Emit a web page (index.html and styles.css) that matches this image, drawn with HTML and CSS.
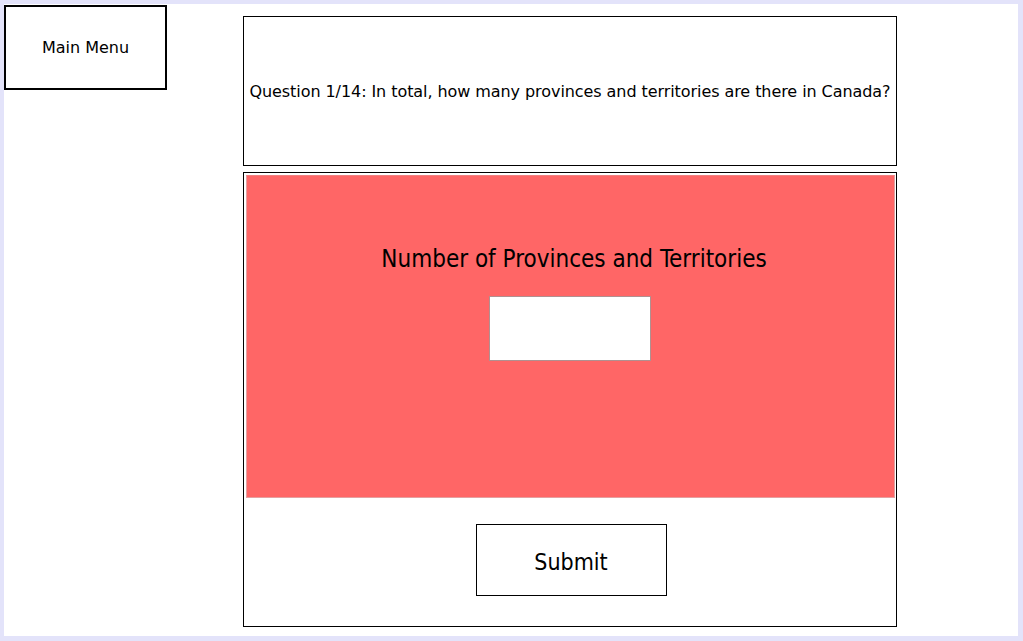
FILE: index.html
```html
<!DOCTYPE html>
<html>
<head>
<meta charset="utf-8">
<link rel="stylesheet" href="styles.css">
</head>
<body>
<div class="frame">
  <div class="sidebar">
    <div class="menu-btn">Main Menu</div>
  </div>
  <div class="main">
    <div class="question">Question 1/14: In total, how many provinces and territories are there in Canada?</div>
    <div class="answer">
      <div class="panel">
        <div class="panel-title">Number of Provinces and Territories</div>
        <input class="num-input" type="text">
      </div>
      <div class="submit-row">
        <div class="submit-btn">Submit</div>
      </div>
    </div>
  </div>
</div>
</body>
</html>
```
FILE: styles.css
```css
html, body {
  margin: 0;
  padding: 0;
  background: #e3e3fa;
  font-family: "DejaVu Sans", sans-serif;
  color: #000;
}
.frame {
  margin: 4px 5px 5px 4px;
  height: 632px;
  background: #fff;
  display: flex;
}
.sidebar {
  width: 239px;
  flex: none;
}
.menu-btn {
  margin-top: 1px;
  width: 159px;
  height: 81px;
  border: 2px solid #000;
  display: flex;
  align-items: center;
  justify-content: center;
  font-size: 16px;
  box-sizing: content-box;
}
.main {
  width: 654px;
  padding-top: 12px;
  display: flex;
  flex-direction: column;
  gap: 6px;
}
.question {
  height: 148px;
  border: 1px solid #000;
  display: flex;
  align-items: center;
  justify-content: center;
  font-size: 16px;
  letter-spacing: -0.07px;
  white-space: nowrap;
}
.answer {
  height: 451px;
  border: 1px solid #000;
  padding: 2px 1px 0 2px;
  display: flex;
  flex-direction: column;
}
.panel {
  height: 321px;
  background: #ff6666;
  border: 1px solid #e4a0a0;
  border-top-color: #f08080;
  display: flex;
  flex-direction: column;
  align-items: center;
}
.panel-title {
  margin-top: 69px;
  margin-left: 7px;
  font-family: "DejaVu Sans Condensed", "DejaVu Sans", sans-serif;
  font-size: 24px;
  line-height: 28px;
}
.num-input {
  margin-top: 23px;
  margin-right: 2px;
  width: 160px;
  height: 63px;
  padding: 0;
  border: 1px solid #b09090;
  background: #fff;
  box-sizing: content-box;
  outline: none;
}
.submit-row {
  display: flex;
  justify-content: center;
  padding-top: 26px;
}
.submit-btn {
  width: 189px;
  height: 66px;
  padding-top: 4px;
  border: 1px solid #000;
  display: flex;
  align-items: center;
  justify-content: center;
  font-family: "DejaVu Sans Condensed", "DejaVu Sans", sans-serif;
  font-size: 23px;
  box-sizing: content-box;
  margin-left: 1px;
}
```
